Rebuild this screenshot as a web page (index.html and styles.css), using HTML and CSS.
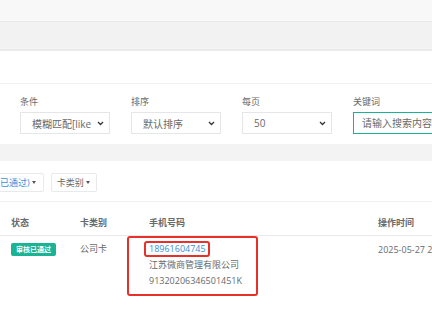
FILE: index.html
```html
<!DOCTYPE html>
<html lang="zh-CN">
<head>
  <meta charset="UTF-8" />
  <meta name="viewport" content="width=device-width, initial-scale=1.0"/>
  <title>卡片审核</title>
  <link rel="stylesheet" href="styles.css">
</head>
<body>

  <div class="topbar"></div>
  <div class="subbar"></div>
  <div class="ibox-title"></div>

  <div class="filters">
    <div class="field">
      <label>条件</label>
      <div class="select">
        <span>模糊匹配[like</span>
        <svg width="7" height="5" viewBox="0 0 7 5"><polyline points="1,1 3.5,3.5 6,1" fill="none" stroke="#333" stroke-width="1.3"/></svg>
      </div>
    </div>
    <div class="field">
      <label>排序</label>
      <div class="select">
        <span>默认排序</span>
        <svg width="7" height="5" viewBox="0 0 7 5"><polyline points="1,1 3.5,3.5 6,1" fill="none" stroke="#333" stroke-width="1.3"/></svg>
      </div>
    </div>
    <div class="field">
      <label>每页</label>
      <div class="select">
        <span>50</span>
        <svg width="7" height="5" viewBox="0 0 7 5"><polyline points="1,1 3.5,3.5 6,1" fill="none" stroke="#333" stroke-width="1.3"/></svg>
      </div>
    </div>
    <div class="field">
      <label>关键词</label>
      <input class="keyword" type="text" placeholder="请输入搜索内容">
    </div>
  </div>

  <div class="gap"></div>

  <div class="panel">
    <div class="toolbar">
      <span class="dd-btn first">已通过)<i class="caret"></i></span>
      <span class="dd-btn">卡类别<i class="caret"></i></span>
    </div>

    <div class="table">
      <div class="row head">
        <div>状态</div>
        <div>卡类别</div>
        <div>手机号码</div>
        <div>操作时间</div>
      </div>
      <div class="row">
        <div><span class="badge">审核已通过</span></div>
        <div>公司卡</div>
        <div class="phone-cell">
          <div class="phone">18961604745</div>
          <div>江苏微商管理有限公司</div>
          <div>91320206346501451K</div>
          <span class="mark outer"></span>
          <span class="mark inner"></span>
        </div>
        <div class="time">2025-05-27 22:14:08</div>
      </div>
    </div>
  </div>

</body>
</html>
```

FILE: styles.css
```css
* { margin: 0; padding: 0; box-sizing: border-box; }

body {
  width: 432px;
  height: 312px;
  overflow: hidden;
  background: #fff;
  color: #676a6c;
  font-family: 'Open Sans', 'Noto Sans CJK SC', sans-serif;
  font-size: 9px;
}

.topbar {
  height: 22px;
  background: #f8f8f8;
  border-bottom: 1px solid #e9e9e9;
}

.subbar {
  height: 29px;
  background: #f2f2f2;
  border-bottom: 2px solid #ebebeb;
}

.ibox-title {
  height: 33px;
  background: #fff;
  border-bottom: 1px solid #f0f0f0;
}

.filters {
  display: grid;
  grid-template-columns: repeat(4, 90px);
  column-gap: 21px;
  padding: 12px 0 10px 20px;
  height: 60px;
}

.field label {
  display: block;
  font-size: 9px;
  line-height: 12px;
  margin-bottom: 4px;
  color: #676a6c;
}

.select {
  height: 22px;
  border: 1px solid #e5e6e7;
  display: flex;
  align-items: center;
  justify-content: space-between;
  padding: 0 5px 0 11px;
  font-size: 10px;
  color: #676a6c;
}

.keyword {
  width: 100px;
  height: 22px;
  border: 1px solid #1ab394;
  padding: 0 8px;
  font-family: inherit;
  font-size: 10px;
  color: #676a6c;
  outline: none;
}

.keyword::placeholder {
  color: #676a6c;
  opacity: 1;
}

.gap {
  height: 17px;
  background: #f3f3f4;
}

.panel {
  background: #fff;
}

.toolbar {
  display: flex;
  gap: 7px;
  padding: 12px 0 9px 0;
  border-bottom: 1px solid #eef0f1;
}

.dd-btn {
  display: inline-flex;
  align-items: center;
  height: 19px;
  padding: 0 6px 0 5px;
  border: 1px solid #e7eaec;
  border-radius: 2px;
  font-size: 9px;
  color: #676a6c;
}

.dd-btn.first {
  margin-left: -9px;
  padding-left: 8px;
  padding-right: 7px;
  color: #3a8fd9;
}

.caret {
  display: inline-block;
  margin-left: 2px;
  border-top: 3px solid #555;
  border-left: 2px solid transparent;
  border-right: 2px solid transparent;
}

.row {
  display: grid;
  grid-template-columns: 69px 69px 229px 120px;
  padding-left: 11px;
  white-space: nowrap;
}

.row > div {
  line-height: 16px;
}

.row.head {
  padding-top: 15px;
  padding-bottom: 6px;
  font-weight: bold;
  border-bottom: 1px solid #e7eaec;
}

.row.head > div {
  line-height: 12px;
}

.row:not(.head) {
  padding-top: 5px;
}

.badge {
  display: inline-block;
  margin-top: 2px;
  padding: 0 5px;
  line-height: 13px;
  font-size: 7px;
  font-weight: bold;
  color: #fff;
  background: #1ab394;
  border-radius: 2px;
}

.phone-cell {
  position: relative;
}

.phone {
  color: #3a8fd9;
}

.mark {
  position: absolute;
  border: 2px solid #e8302a;
  border-radius: 3px;
}

.mark.outer {
  left: -22px;
  top: -5px;
  width: 131px;
  height: 60px;
}

.mark.inner {
  left: -5px;
  top: 0;
  width: 66px;
  height: 16px;
}

.time {
  padding-top: 1px;
}
```
